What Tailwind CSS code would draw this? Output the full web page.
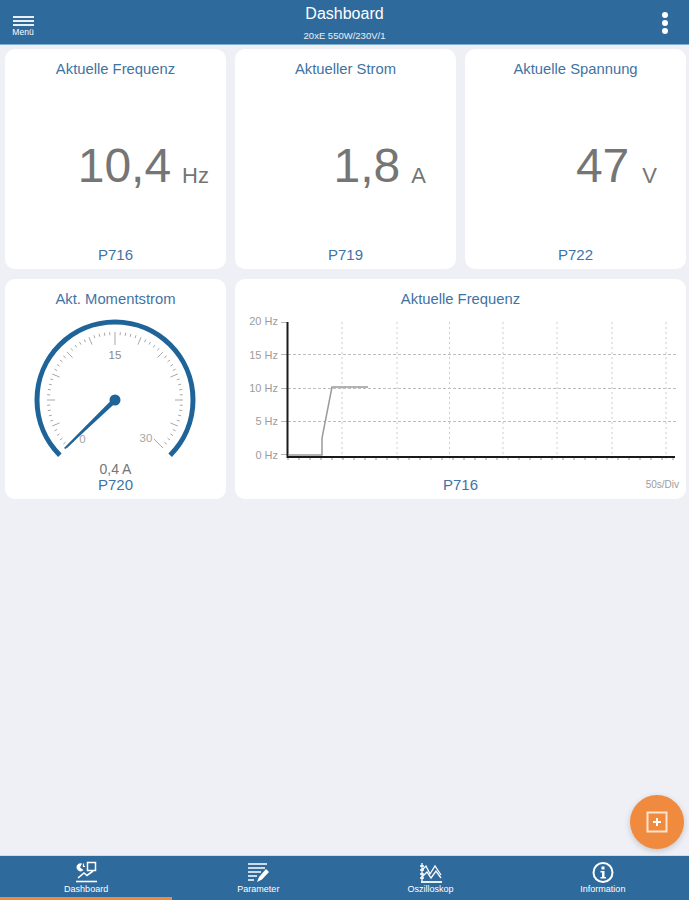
<!DOCTYPE html>
<html lang="de">
<head>
  <meta charset="UTF-8" />
  <meta name="viewport" content="width=device-width,initial-scale=1" />
  <title>Dashboard</title>
  <script src="https://cdn.jsdelivr.net/npm/@tailwindcss/browser@4"></script>
</head>
<body class="bg-[#eff0f5] font-['Liberation_Sans',Arial,sans-serif]">
<div class="relative w-[689px] h-[900px] overflow-hidden flex flex-col">

  <!-- ========= HEADER ========= -->
  <header class="h-[45px] shrink-0 bg-[#2f6a9d] border-b border-[#7fb0d0] flex items-start justify-between text-white">
    <div class="w-[46px] pt-[16px] flex flex-col items-center">
      <div class="w-[21px] flex flex-col gap-[2px]">
        <span class="h-[2px] bg-white/90"></span>
        <span class="h-[2px] bg-white/90"></span>
        <span class="h-[2px] bg-white/90"></span>
      </div>
      <span class="text-[8.5px] leading-[9px] mt-[2px]">Menü</span>
    </div>
    <div class="flex flex-col items-center">
      <span class="text-[16px] leading-[18px] mt-[5px]">Dashboard</span>
      <span class="text-[9.5px] leading-[10px] mt-[8px] text-white/90">20xE 550W/230V/1</span>
    </div>
    <div class="w-[46px] pt-[12px] pl-[19px] flex flex-col gap-[2px]">
      <span class="w-[6px] h-[6px] rounded-full bg-white"></span>
      <span class="w-[6px] h-[6px] rounded-full bg-white"></span>
      <span class="w-[6px] h-[6px] rounded-full bg-white"></span>
    </div>
  </header>

  <!-- ========= CONTENT ========= -->
  <main class="flex-1 pt-[4px] pl-[5px] pr-[4px]">
    <div class="grid grid-cols-[221px_221px_221px] gap-x-[9px] gap-y-[10px] grid-rows-[220px_220px]">

      <section class="bg-white rounded-[10px] flex flex-col items-center pt-[12px] pb-[5px]">
        <h3 class="text-[14.8px] leading-[17px] text-[#3f73a3]">Aktuelle Frequenz</h3>
        <div class="flex-1 w-full flex items-center justify-end pr-[17px] pt-[8px] text-[#757575]">
          <span class="text-[48px] leading-[56px]">10,4</span>
          <span class="text-[22px] ml-[11px] mt-[18px]">Hz</span>
        </div>
        <p class="text-[15px] leading-[18px] text-[#3f73a3]">P716</p>
      </section>

      <section class="bg-white rounded-[10px] flex flex-col items-center pt-[12px] pb-[5px]">
        <h3 class="text-[14.8px] leading-[17px] text-[#3f73a3]">Aktueller Strom</h3>
        <div class="flex-1 w-full flex items-center justify-end pr-[30px] pt-[8px] text-[#757575]">
          <span class="text-[48px] leading-[56px]">1,8</span>
          <span class="text-[22px] ml-[11px] mt-[18px]">A</span>
        </div>
        <p class="text-[15px] leading-[18px] text-[#3f73a3]">P719</p>
      </section>

      <section class="bg-white rounded-[10px] flex flex-col items-center pt-[12px] pb-[5px]">
        <h3 class="text-[14.8px] leading-[17px] text-[#3f73a3]">Aktuelle Spannung</h3>
        <div class="flex-1 w-full flex items-center justify-end pr-[29px] pt-[8px] text-[#757575]">
          <span class="text-[48px] leading-[56px]">47</span>
          <span class="text-[22px] ml-[13px] mt-[18px]">V</span>
        </div>
        <p class="text-[15px] leading-[18px] text-[#3f73a3]">P722</p>
      </section>

      <!-- gauge -->
      <section class="bg-white rounded-[10px] flex flex-col items-center pt-[12px]">
        <h3 class="text-[14.8px] leading-[17px] text-[#3f73a3]">Akt. Momentstrom</h3>
        <svg id="gauge" width="221" height="149" viewBox="0 0 221 149" class="mt-[5px] shrink-0">
          <path d="M 54.85 142.15 A 78 78 0 1 1 165.15 142.15" fill="none" stroke="#1f6499" stroke-width="5" />
          <g id="ticks" stroke="#a8a8a8" fill="none"></g>
          <text x="110" y="46" font-size="11.5" fill="#8a8a8a" text-anchor="middle">15</text>
          <text x="77.5" y="130" font-size="11.5" fill="#a5a5a5" text-anchor="middle">0</text>
          <text x="141" y="129" font-size="11.5" fill="#a5a5a5" text-anchor="middle">30</text>
          <path d="M 59 135 L 108.5 85 L 112 88.5 L 60.5 136 Z" fill="#1f6499" />
          <circle cx="110" cy="87" r="5.5" fill="#1f6499" />
        </svg>
        <p class="text-[14px] leading-[15px] text-[#757575]">0,4 A</p>
        <p class="text-[15px] leading-[16px] text-[#3f73a3]">P720</p>
      </section>

      <!-- chart -->
      <section class="col-span-2 bg-white rounded-[10px] flex flex-col items-center pt-[12px]">
        <h3 class="text-[14.8px] leading-[17px] text-[#3f73a3]">Aktuelle Frequenz</h3>
        <svg id="chart" width="451" height="150" viewBox="0 0 451 150" class="mt-[5px] shrink-0">
          <g stroke="#bdbdbd" fill="none">
            <path d="M53 41.5H441M53 75.5H441M53 108.5H441" stroke-dasharray="3 2" />
            <path d="M107 9V149M162 9V149M214.5 9V149M268 9V149M322 9V149M377 9V149M431 9V149" stroke-dasharray="2 3" stroke="#cccccc" />
          </g>
          <g id="xticks" stroke="#9a9a9a"></g>
          <g font-size="11" fill="#9c9c9c" text-anchor="end">
            <text x="43" y="12">20 Hz</text>
            <text x="43" y="46">15 Hz</text>
            <text x="43" y="79">10 Hz</text>
            <text x="43" y="112">5 Hz</text>
            <text x="43" y="146">0 Hz</text>
          </g>
          <path d="M46 9.5H52M46 41.5H52M46 75.5H52M46 108.5H52M46 141.5H52" stroke="#b5b5b5" />
          <path d="M54 142H87V125L97 74H133" fill="none" stroke="#9a9a9a" stroke-width="1.5" />
          <path d="M52.5 9V144H440" fill="none" stroke="#1a1a1a" stroke-width="2" />
        </svg>
        <div class="relative w-full flex-1 flex justify-center">
          <p class="text-[15px] leading-[18px] text-[#3f73a3] mt-[13px]">P716</p>
          <span class="absolute right-[7px] top-[16px] text-[10px] leading-[12px] text-[#9c9c9c]">50s/Div</span>
        </div>
      </section>
    </div>
  </main>

  <!-- ========= FAB ========= -->
  <button class="absolute left-[630px] top-[795px] w-[54px] h-[54px] rounded-full bg-[#f08a3e] shadow-[0_2px_6px_rgba(0,0,0,0.18)] flex items-center justify-center">
    <svg width="22" height="22" viewBox="0 0 22 22" fill="none" stroke="#fbe3cf" stroke-width="2">
      <rect x="1.5" y="1.5" width="19" height="19" />
      <path d="M11 7V15M7 11H15" stroke="#ffffff" />
    </svg>
  </button>

  <!-- ========= TAB BAR ========= -->
  <nav class="relative h-[45px] shrink-0 bg-[#2f6a9d] border-t border-[#cfdde8] grid grid-cols-4 text-white">
    <a class="flex flex-col items-center pt-[5px]">
      <svg width="24" height="24" viewBox="0 0 24 24" fill="none" stroke="#ffffff" class="h-[24px]">
        <path d="M8 2.5A4 4 0 1 0 9.5 9L6 6.5Z" fill="#ffffff" stroke="none" />
        <path d="M9.5 2.5V5.5H11" stroke-width="1.2" />
        <rect x="13.5" y="1.5" width="8" height="8" stroke-width="1.5" />
        <path d="M4 17L10 12L13 14.5L19 10" stroke-width="1.6" />
        <path d="M2 20.5H23" stroke-width="1.6" />
      </svg>
      <span class="text-[9px] leading-[10px] -mt-[1px]">Dashboard</span>
    </a>
    <a class="flex flex-col items-center pt-[5px]">
      <svg width="24" height="24" viewBox="0 0 24 24" fill="none" stroke="#ffffff" stroke-width="1.6" class="h-[24px]">
        <path d="M2 3H21M2 7H19M2 11H15M2 15H11M2 19H8" />
        <path d="M11 21L13 16L20 8L23 11L16 18.5Z" fill="#ffffff" stroke="none" />
      </svg>
      <span class="text-[9px] leading-[10px] -mt-[1px]">Parameter</span>
    </a>
    <a class="flex flex-col items-center pt-[5px]">
      <svg width="24" height="24" viewBox="0 0 24 24" fill="none" stroke="#ffffff" stroke-width="1.3" class="h-[24px]">
        <path d="M3 2V20M1 5H5M1 9H5M1 13H5M1 17H5" />
        <path d="M3 9L7 5L11 13L16 5L22 14" />
        <path d="M3 16L8 11L12 17L17 10L22 17" />
        <path d="M2 21H23" stroke-width="1.8" />
      </svg>
      <span class="text-[9px] leading-[10px] -mt-[1px]">Oszilloskop</span>
    </a>
    <a class="flex flex-col items-center pt-[5px]">
      <svg width="24" height="24" viewBox="0 0 24 24" fill="none" stroke="#ffffff" class="h-[24px]">
        <circle cx="12" cy="11.5" r="9.5" stroke-width="2" />
        <rect x="10.5" y="5.5" width="3" height="3" fill="#ffffff" stroke="none" />
        <path d="M9.5 10H13.5V16H15V17.5H9.5V16H11V11.5H9.5Z" fill="#ffffff" stroke="none" />
      </svg>
      <span class="text-[9px] leading-[10px] -mt-[1px]">Information</span>
    </a>
    <span class="absolute left-0 bottom-0 w-[172px] h-[3px] bg-[#f08a3e]"></span>
  </nav>
</div>

<script>
/* gauge ticks: 60 divisions over 270 degrees */
const NS = 'http://www.w3.org/2000/svg';
const ticks = document.getElementById('ticks');
const cx = 110, cy = 87;
for (let i = 0; i <= 60; i++) {
  const a = (-135 + i * 4.5) * Math.PI / 180;
  const major = i % 30 === 0, mid = i % 5 === 0;
  const r1 = 68, r2 = major ? 55 : mid ? 60 : 65;
  const l = document.createElementNS(NS, 'line');
  l.setAttribute('x1', cx + r1 * Math.sin(a));
  l.setAttribute('y1', cy - r1 * Math.cos(a));
  l.setAttribute('x2', cx + r2 * Math.sin(a));
  l.setAttribute('y2', cy - r2 * Math.cos(a));
  l.setAttribute('stroke-width', 1);
  ticks.appendChild(l);
}
/* chart x ticks */
const xt = document.getElementById('xticks');
for (let x = 53; x < 440; x += 11) {
  const l = document.createElementNS(NS, 'line');
  l.setAttribute('x1', x); l.setAttribute('x2', x);
  l.setAttribute('y1', 145); l.setAttribute('y2', 147);
  xt.appendChild(l);
}
</script>
</body>
</html>
